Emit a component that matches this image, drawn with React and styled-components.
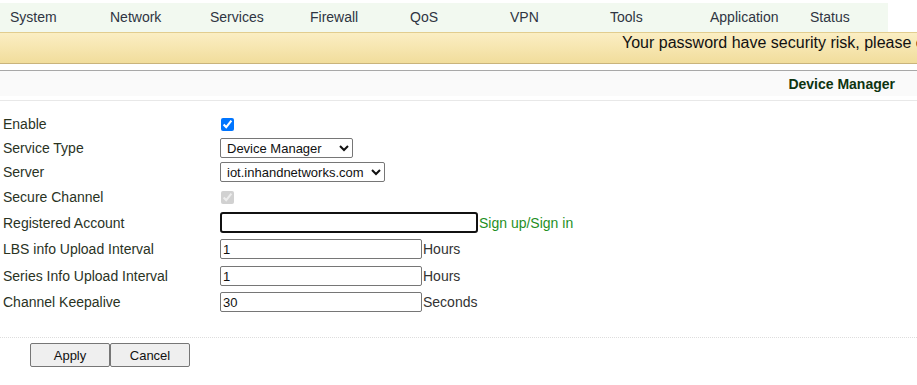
import styled, { createGlobalStyle } from "styled-components"

const menu = ["System","Network","Services","Firewall","QoS","VPN","Tools","Application","Status"]

const GlobalStyle = createGlobalStyle`
    body{
        margin:0;
        background:#fff;
        font-family:"Liberation Sans", Arial, sans-serif;
        overflow:hidden;
    }
`
const Page = styled.div`
    width:917px;
    height:385px;
    overflow:hidden;
`
const Nav = styled.nav`
    margin-top:3px;
    width:888px;
    height:29px;
    display:flex;
    background-color:#f2f9f0;
`
const NavItem = styled.a`
    flex:none;
    width:100px;
    padding-left:10px;
    box-sizing:border-box;
    font-size:14px;
    line-height:28px;
    color:#2f3542;
    text-decoration:none;
`
const Banner = styled.div`
    height:30px;
    border-top:1px solid #e2cd8f;
    border-bottom:1px solid #c9b47c;
    background:linear-gradient(#fbeec3, #f1dd9c);
    padding-left:622px;
    white-space:nowrap;
    overflow:hidden;
    font-size:16px;
    line-height:20px;
    color:#111;
`
const TitleWrap = styled.div`
    margin-top:6px;
    border-top:1px solid #a8a8a8;
    border-bottom:1px solid #e8e8e8;
    padding-bottom:4px;
`
const TitleBar = styled.div`
    height:25px;
    background-color:#fafafa;
    display:flex;
    justify-content:flex-end;
    align-items:center;
    padding-right:22px;
    font-size:14px;
    font-weight:bold;
    color:#0e3410;
`
const Form = styled.div`
    margin-top:11px;
    display:flex;
    flex-direction:column;
`
const Row = styled.div`
    display:grid;
    grid-template-columns:220px 1fr;
    align-items:center;
    height:${props => props.$h}px;
`
const Label = styled.span`
    padding-left:3px;
    font-size:14px;
    color:#2a331f;
`
const Field = styled.div`
    display:flex;
    align-items:center;
    font-size:14px;
    color:#333;
`
const Check = styled.input`
    margin:0 0 0 1px;
    width:13px;
    height:13px;
`
const Select = styled.select`
    width:${props => props.$w}px;
    height:20px;
    font-family:"Liberation Sans", Arial, sans-serif;
    font-size:13px;
    color:#111;
    border:1px solid #767676;
    border-radius:2px;
    background:#fff;
    padding:0 0 0 2px;
    margin:0;
`
const TextInput = styled.input`
    box-sizing:border-box;
    width:${props => props.$w}px;
    height:${props => props.$focus ? 21 : 20}px;
    margin:0;
    padding:1px 2px;
    font-family:"Liberation Sans", Arial, sans-serif;
    font-size:13px;
    color:#111;
    border:${props => props.$focus ? "2px solid #111" : "1px solid #767676"};
    border-radius:${props => props.$focus ? 3 : 2}px;
    outline:none;
`
const Unit = styled.span`
    margin-left:1px;
    color:#333;
`
const Link = styled.a`
    margin-left:1px;
    color:#1f8f1f;
    text-decoration:none;
`
const Footer = styled.div`
    margin-top:22px;
    border-top:1px dotted #ddd;
    padding:5px 0 0 30px;
    display:flex;
`
const Button = styled.button`
    width:80px;
    height:24px;
    margin:0;
    font-family:"Liberation Sans", Arial, sans-serif;
    font-size:13px;
    color:#111;
    background-color:#efefef;
    border:1px solid #767676;
    border-radius:2px;
`

const App = () => {
    return(
        <Page>
            <GlobalStyle/>
            <Nav>
                {menu.map((item,index) => <NavItem key={index}>{item}</NavItem>)}
            </Nav>
            <Banner>Your password have security risk, please change it.</Banner>
            <TitleWrap>
                <TitleBar>Device Manager</TitleBar>
            </TitleWrap>
            <Form>
                <Row $h={24}>
                    <Label>Enable</Label>
                    <Field><Check type="checkbox" defaultChecked/></Field>
                </Row>
                <Row $h={24}>
                    <Label>Service Type</Label>
                    <Field>
                        <Select $w={133} defaultValue="dm">
                            <option value="dm">Device Manager</option>
                        </Select>
                    </Field>
                </Row>
                <Row $h={24}>
                    <Label>Server</Label>
                    <Field>
                        <Select $w={165} defaultValue="iot">
                            <option value="iot">iot.inhandnetworks.com</option>
                        </Select>
                    </Field>
                </Row>
                <Row $h={26}>
                    <Label>Secure Channel</Label>
                    <Field><Check type="checkbox" defaultChecked disabled/></Field>
                </Row>
                <Row $h={25}>
                    <Label>Registered Account</Label>
                    <Field>
                        <TextInput $w={258} $focus type="text"/>
                        <Link href="#">Sign up/Sign in</Link>
                    </Field>
                </Row>
                <Row $h={28}>
                    <Label>LBS info Upload Interval</Label>
                    <Field>
                        <TextInput $w={202} type="text" defaultValue="1"/>
                        <Unit>Hours</Unit>
                    </Field>
                </Row>
                <Row $h={26}>
                    <Label>Series Info Upload Interval</Label>
                    <Field>
                        <TextInput $w={202} type="text" defaultValue="1"/>
                        <Unit>Hours</Unit>
                    </Field>
                </Row>
                <Row $h={26}>
                    <Label>Channel Keepalive</Label>
                    <Field>
                        <TextInput $w={202} type="text" defaultValue="30"/>
                        <Unit>Seconds</Unit>
                    </Field>
                </Row>
            </Form>
            <Footer>
                <Button>Apply</Button>
                <Button>Cancel</Button>
            </Footer>
        </Page>
    )
}

export default App
